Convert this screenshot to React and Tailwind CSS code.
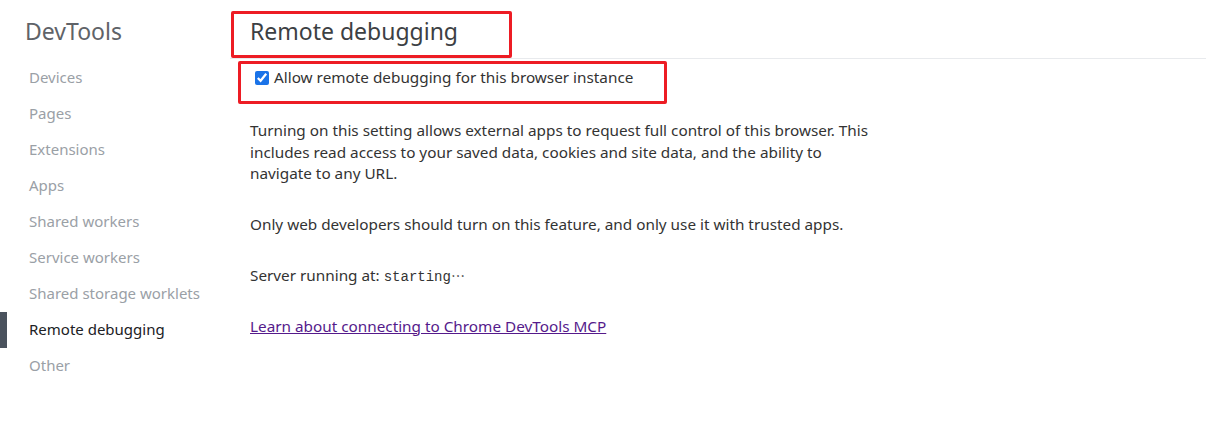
import React from 'react';

const navItems = [
  'Devices',
  'Pages',
  'Extensions',
  'Apps',
  'Shared workers',
  'Service workers',
  'Shared storage worklets',
  'Remote debugging',
  'Other',
];

const ACTIVE = 'Remote debugging';

function Sidebar() {
  return (
    <div className="w-[230px] shrink-0">
      <h1 className="pl-[25px] pt-[15px] h-[50px] text-[23px] leading-[32px] text-[#5f6368]">DevTools</h1>
      <ul className="pt-[9px]">
        {navItems.map((item) => (
          <li key={item} className="relative h-[36px] flex items-center pl-[29px]">
            {item === ACTIVE && <div className="absolute left-0 top-[1px] h-[36px] w-[7px] bg-[#4a525d]"></div>}
            <span className={`text-[15px] ${item === ACTIVE ? 'text-[#202124]' : 'text-[#9aa0a6]'}`}>{item}</span>
          </li>
        ))}
      </ul>
    </div>
  );
}

export default function App() {
  return (
    <div className="relative w-[1206px] h-[432px] bg-white flex overflow-hidden" style={{ fontFamily: '"Noto Sans", sans-serif' }}>
      <Sidebar />

      <div className="flex-1">
        {/* Header */}
        <div className="h-[59px] border-b border-[#e8eaed] pl-[20px] pt-[15px]">
          <h2 className="text-[23px] leading-[32px] text-[#3c4043]">Remote debugging</h2>
        </div>

        <div className="pl-[20px]">
          <label className="flex items-center h-[37px] pl-[5px] gap-[5px] text-[15.3px] text-[#333]">
            <input type="checkbox" defaultChecked className="w-[14px] h-[14px] m-0 accent-[#1a73e8]" />
            Allow remote debugging for this browser instance
          </label>

          <p className="mt-[24px] w-[622px] text-[15.3px] leading-[21.5px] text-[#333]">
            Turning on this setting allows external apps to request full control of this browser. This includes read access to your saved data, cookies and site data, and the ability to navigate to any URL.
          </p>

          <p className="mt-[29px] text-[15.3px] leading-[21.5px] text-[#333]">
            Only web developers should turn on this feature, and only use it with trusted apps.
          </p>

          <p className="mt-[30px] text-[15.3px] leading-[21.5px] text-[#333]">
            Server running at:{' '}
            <span className="text-[14px]" style={{ fontFamily: '"Liberation Mono", monospace' }}>starting</span>
            <span lang="zh-CN" className="text-[14px]" style={{ fontFamily: '"Noto Sans CJK SC", sans-serif' }}>…</span>
          </p>

          <p className="mt-[27px] text-[15.3px] leading-[21.5px]">
            <a href="#" className="text-[#551a8b] underline">Learn about connecting to Chrome DevTools MCP</a>
          </p>
        </div>
      </div>

      {/* Red annotation boxes */}
      <div className="absolute left-[231px] top-[11px] w-[281px] h-[47px] border-[3px] border-[#ed1c24] rounded-[2px]"></div>
      <div className="absolute left-[238px] top-[61px] w-[429px] h-[43px] border-[3px] border-[#ed1c24] rounded-[2px]"></div>
    </div>
  );
}
